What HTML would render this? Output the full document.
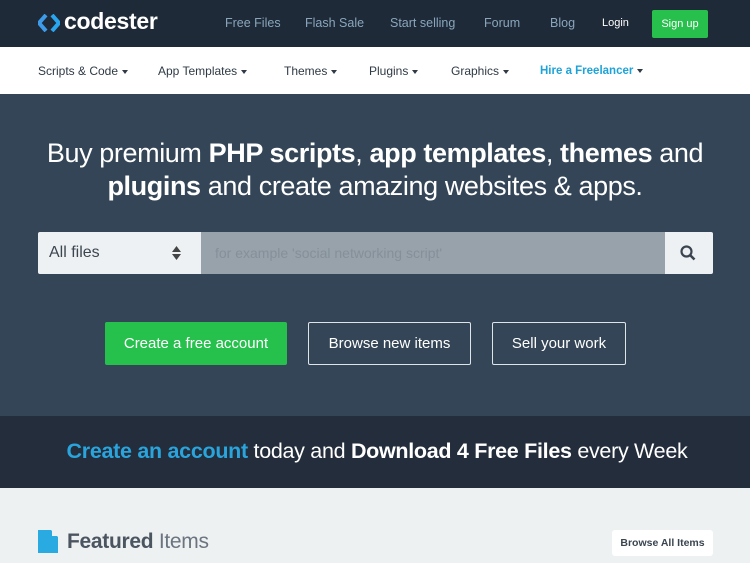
<!DOCTYPE html>
<html><head><style>
*{margin:0;padding:0;box-sizing:border-box}
body{width:750px;height:563px;overflow:hidden;font-family:"Liberation Sans",sans-serif;background:#eef1f2;position:relative}
.a{position:absolute;white-space:nowrap}
.top{position:absolute;left:0;top:0;width:750px;height:47px;background:#1e2a37}
.nav{position:absolute;left:0;top:47px;width:750px;height:47px;background:#fff}
.hero{position:absolute;left:0;top:94px;width:750px;height:322px;background:#334556}
.band{position:absolute;left:0;top:416px;width:750px;height:72px;background:#232d3b}
.tl{color:#8aa6bd;font-size:12.5px;top:16px}
.nl{color:#2f3a45;font-size:12px;top:64px;line-height:14px}
.car{display:inline-block;border-left:3.5px solid transparent;border-right:3.5px solid transparent;border-top:4px solid currentColor;vertical-align:middle;margin-left:4px}
.btn{position:absolute;top:322px;height:43px;font-size:15px;color:#fff;text-align:center;line-height:41px;border-radius:2px}
</style></head><body>
<div class="top"></div>
<svg class="a" style="left:38px;top:14px" width="22" height="18" viewBox="0 0 22 18"><path d="M8 1 L1 9 L8 17" fill="none" stroke="#3d9be9" stroke-width="4"/><path d="M14 1 L21 9 L14 17" fill="none" stroke="#2aa6f0" stroke-width="4"/></svg>
<div class="a" style="left:64px;top:8px;color:#fff;font-size:23px;font-weight:bold;letter-spacing:-0.3px">codester</div>
<div class="a tl" style="left:225px">Free Files</div>
<div class="a tl" style="left:305px">Flash Sale</div>
<div class="a tl" style="left:390px">Start selling</div>
<div class="a tl" style="left:484px">Forum</div>
<div class="a tl" style="left:550px">Blog</div>
<div class="a" style="left:602px;top:17px;color:#fff;font-size:11px">Login</div>
<div class="a" style="left:652px;top:10px;width:56px;height:28px;background:#27c04c;color:#fff;font-size:11px;text-align:center;line-height:28px;border-radius:2px">Sign up</div>
<div class="nav"></div>
<div class="a nl" style="left:38px">Scripts &amp; Code<span class="car"></span></div>
<div class="a nl" style="left:158px">App Templates<span class="car"></span></div>
<div class="a nl" style="left:284px">Themes<span class="car"></span></div>
<div class="a nl" style="left:369px">Plugins<span class="car"></span></div>
<div class="a nl" style="left:451px">Graphics<span class="car"></span></div>
<div class="a nl" style="left:540px;color:#1ea3d8;font-weight:bold;font-size:11.5px">Hire a Freelancer<span class="car" style="color:#2f3a45"></span></div>
<div class="hero"></div>
<div class="a" style="left:0;width:750px;top:137px;text-align:center;color:#fff;font-size:27px;line-height:33px;white-space:normal;letter-spacing:-0.4px">Buy premium <b>PHP scripts</b>, <b>app templates</b>, <b>themes</b> and<br><b>plugins</b> and create amazing websites &amp; apps.</div>
<div class="a" style="left:38px;top:232px;width:163px;height:42px;background:#eef1f3;border-radius:2px 0 0 2px"></div>
<div class="a" style="left:49px;top:244px;color:#3c4650;font-size:16px">All files</div>
<svg class="a" style="left:172px;top:246px" width="9" height="14"><path d="M4.5 0 L9 6 H0Z M4.5 14 L9 8 H0Z" fill="#444"/></svg>
<div class="a" style="left:201px;top:232px;width:464px;height:42px;background:#97a2ab"></div>
<div class="a" style="left:215px;top:245px;color:#85909a;font-size:14px">for example 'social networking script'</div>
<div class="a" style="left:665px;top:232px;width:48px;height:42px;background:#eef1f3;border-radius:0 2px 2px 0"></div>
<svg class="a" style="left:680px;top:245px" width="16" height="16"><circle cx="6.5" cy="6.5" r="5" fill="none" stroke="#3a4550" stroke-width="2.2"/><path d="M10 10 L14.5 14.5" stroke="#3a4550" stroke-width="2.6"/></svg>
<div class="btn" style="left:105px;width:182px;background:#25c14c;line-height:43px">Create a free account</div>
<div class="btn" style="left:308px;width:163px;border:1.5px solid #dfe4e8">Browse new items</div>
<div class="btn" style="left:492px;width:134px;border:1.5px solid #dfe4e8">Sell your work</div>
<div class="band"></div>
<div class="a" style="left:0;width:754px;top:439px;text-align:center;color:#fff;font-size:21.5px;letter-spacing:-0.3px"><b style="color:#2aa4dc">Create an account</b> today and <b>Download 4 Free Files</b> every Week</div>
<svg class="a" style="left:38px;top:530px" width="20" height="23"><path d="M0 0 H13 L20 7 V23 H0Z" fill="#29abe2"/><path d="M14 0 V6 H20" fill="#eef1f2"/></svg>
<div class="a" style="left:67px;top:530px;color:#4a5560;font-size:21px;letter-spacing:-0.3px"><b>Featured</b> <span style="color:#6a7580">Items</span></div>
<div class="a" style="left:612px;top:530px;width:101px;height:26px;background:#fff;border-radius:3px;color:#3a4550;font-size:10.5px;font-weight:bold;text-align:center;line-height:26px">Browse All Items</div>
</body></html>
